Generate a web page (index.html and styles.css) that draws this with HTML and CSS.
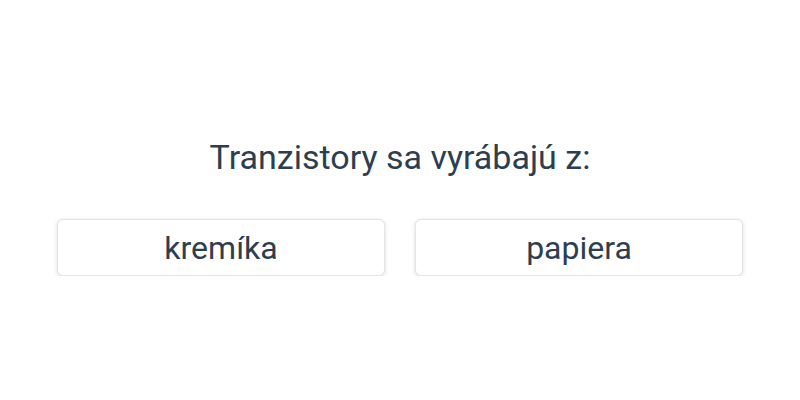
FILE: index.html
```html
<!DOCTYPE html>
<html>
<head>
  <title>Kvíz</title>
  <link rel="stylesheet" href="styles.css">
</head>
<body>
  <div class="quiz">
    <h1 class="question">Tranzistory sa vyrábajú z:</h1>
    <div class="answers">
      <button class="answer">kremíka</button>
      <button class="answer">papiera</button>
    </div>
  </div>
</body>
</html>
```

FILE: styles.css
```css
body {
  margin: 0;
  font-family: Roboto, "Liberation Sans", sans-serif;
  color: #2c3e50;
  background: #fff;
}
.quiz {
  padding: 135px 57px 0;
}
.question {
  margin: 0 0 40px;
  font-size: 34px;
  font-weight: 400;
  line-height: 44px;
  text-align: center;
}
.answers {
  display: grid;
  grid-template-columns: 1fr 1fr;
  gap: 30px;
}
.answer {
  height: 57px;
  padding: 0;
  font-family: inherit;
  font-size: 32px;
  color: #2c3e50;
  background: #fff;
  border: 1px solid #e4e4e4;
  border-radius: 6px;
  box-shadow: 0 1px 4px rgba(0, 0, 0, 0.14);
  cursor: pointer;
}
```
